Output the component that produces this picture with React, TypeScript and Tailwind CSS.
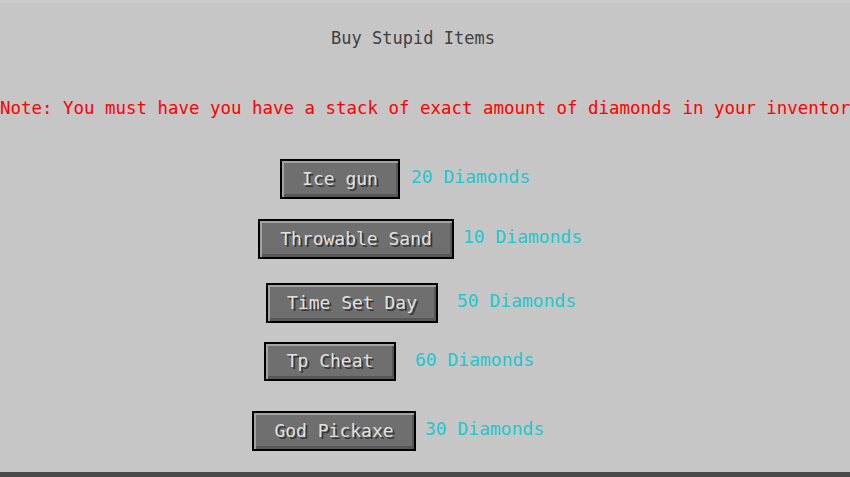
import React from 'react'

// Minecraft-style shop screen: gray panel, pixel-ish mono text, beveled buttons.

type Item = { name: string; price: number; row: string; btn: string; gap: string }

const ITEMS: Item[] = [
  { name: 'Ice gun', price: 20, row: 'mt-[41px] pl-[280px] h-[40px]', btn: 'w-[120px]', gap: 'ml-[11px]' },
  { name: 'Throwable Sand', price: 10, row: 'mt-[20px] pl-[258px] h-[40px]', btn: 'w-[196px]', gap: 'ml-[9px]' },
  { name: 'Time Set Day', price: 50, row: 'mt-[24px] pl-[266px] h-[40px]', btn: 'w-[172px]', gap: 'ml-[19px]' },
  { name: 'Tp Cheat', price: 60, row: 'mt-[19px] pl-[264px] h-[39px]', btn: 'w-[132px]', gap: 'ml-[19px]' },
  { name: 'God Pickaxe', price: 30, row: 'mt-[30px] pl-[252px] h-[40px]', btn: 'w-[164px]', gap: 'ml-[9px]' },
]

const FONT = "font-['DejaVu_Sans_Mono','Liberation_Mono',monospace]"

function McButton({ label, width }: { label: string; width: string }) {
  return (
    <div className={`${width} h-full border-2 border-black bg-[#6f6f6f] shadow-[inset_2px_2px_0_#a2a2a2,inset_-2px_-3px_0_#575757] flex items-center justify-center`}>
      <span className="text-[18px] leading-none text-[#e0e0e0] [text-shadow:2px_2px_0_#383838] pb-[1px]">
        {label}
      </span>
    </div>
  )
}

export default function App() {
  return (
    <div className={`relative w-[850px] h-[477px] bg-[#c6c6c6] overflow-hidden ${FONT}`}>
      <div className="h-[3px] bg-[#cbcbcb]" />

      {/* Title */}
      <div className="mt-[25px] h-[20px] leading-[20px] text-center pr-[24px] text-[17px] text-[#404040]">
        Buy Stupid Items
      </div>

      {/* Warning */}
      <div className="mt-[50px] h-[20px] leading-[20px] whitespace-nowrap overflow-hidden text-[17.45px] text-[#ff0000]">
        Note: You must have you have a stack of exact amount of diamonds in your inventory
      </div>

      {/* Shop rows */}
      {ITEMS.map((it) => (
        <div key={it.name} className={`flex items-center ${it.row}`}>
          <McButton label={it.name} width={it.btn} />
          <span className={`${it.gap} pb-[4px] text-[18px] leading-none text-[#22c6cf]`}>
            {it.price} Diamonds
          </span>
        </div>
      ))}

      <div className="absolute left-0 right-0 bottom-0 h-[5px] bg-[#4a4a4a]" />
    </div>
  )
}
